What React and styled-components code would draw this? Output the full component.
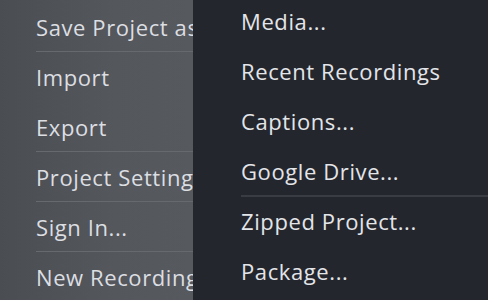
import styled, { createGlobalStyle } from "styled-components";

const Global = createGlobalStyle`
  html, body {
    margin: 0;
    padding: 0;
    background: #23262d;
    overflow: hidden;
  }
  body {
    font-family: "Open Sans", "Lato", sans-serif;
  }
`;

const fileItems = [
  { label: "Save Project as", divider: true },
  { label: "Import" },
  { label: "Export", divider: true },
  { label: "Project Settings", divider: true },
  { label: "Sign In...", divider: true },
  { label: "New Recording" },
];

const importItems = [
  { label: "Media..." },
  { label: "Recent Recordings" },
  { label: "Captions..." },
  { label: "Google Drive...", divider: true },
  { label: "Zipped Project..." },
  { label: "Package..." },
];

export default function App() {
  return (
    <>
      <Global />
      <Layout>
        <FileMenu>
          {fileItems.map((item) => (
            <FileRow key={item.label} $divider={item.divider}>
              {item.label}
            </FileRow>
          ))}
        </FileMenu>
        <SubMenu>
          {importItems.map((item) => (
            <SubRow key={item.label} $divider={item.divider}>
              {item.label}
            </SubRow>
          ))}
        </SubMenu>
      </Layout>
    </>
  );
}

const Layout = styled.div`
  display: flex;
  width: 488px;
  height: 300px;
  overflow: hidden;
`;

const FileMenu = styled.div`
  width: 193px;
  flex-shrink: 0;
  padding: 2px 0 0 36px;
  box-sizing: border-box;
  background: linear-gradient(90deg, #4a4d52 0%, #54575c 60%, #56595e 100%);
  display: flex;
  flex-direction: column;
  overflow: hidden;
`;

const FileRow = styled.div`
  height: 50px;
  flex-shrink: 0;
  box-sizing: border-box;
  display: flex;
  align-items: center;
  white-space: nowrap;
  font-size: 22px;
  letter-spacing: 0.6px;
  color: #dcdee2;
  border-bottom: 1px solid ${(p) => (p.$divider ? "#66696e" : "transparent")};
`;

const SubMenu = styled.div`
  flex: 1;
  background: #23262d;
  display: flex;
  flex-direction: column;
  margin-top: -3px;
  padding-left: 48px;
`;

const SubRow = styled.div`
  height: 50px;
  flex-shrink: 0;
  box-sizing: border-box;
  display: flex;
  align-items: center;
  white-space: nowrap;
  font-size: 22px;
  letter-spacing: 0.6px;
  color: #e3e5e9;
  border-bottom: 2px solid ${(p) => (p.$divider ? "#393c43" : "transparent")};
`;
